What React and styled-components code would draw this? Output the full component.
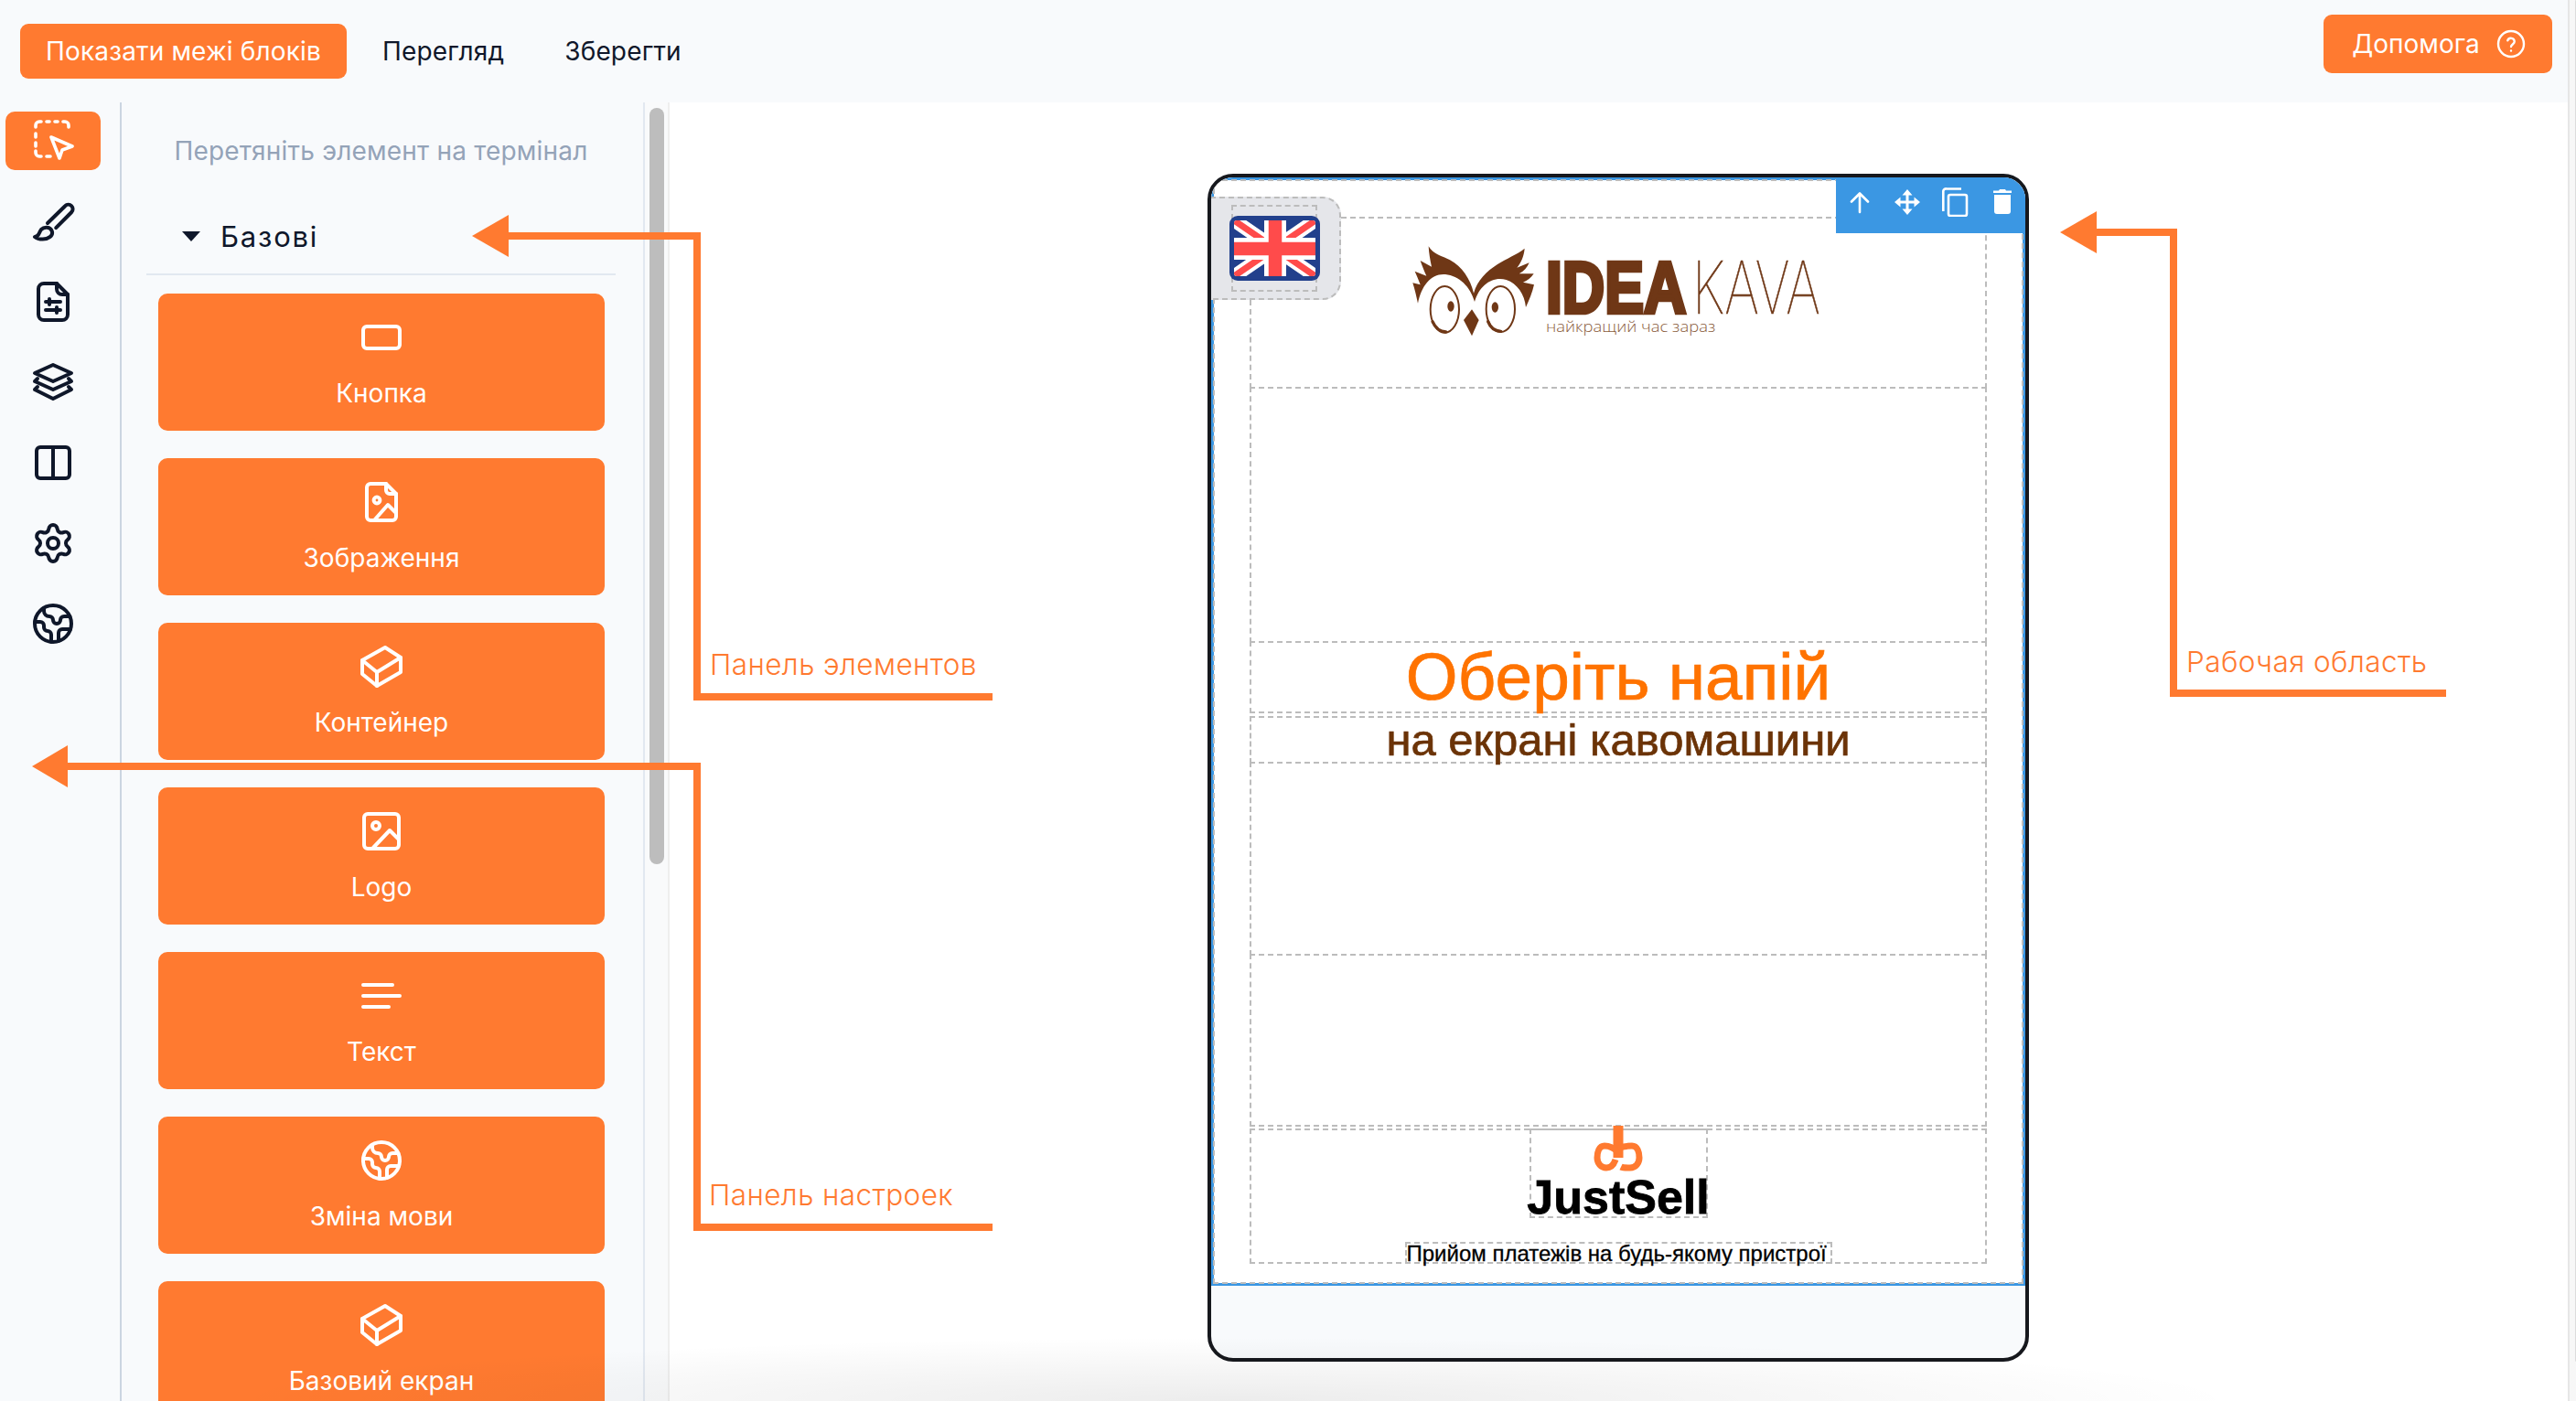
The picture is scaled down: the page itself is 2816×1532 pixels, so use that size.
import React from 'react';
import styled, { createGlobalStyle } from 'styled-components';
import { Settings, Earth } from 'lucide-react';

const orange = '#ff7a30';

const GlobalStyle = createGlobalStyle`
html, body {
    margin: 0;
    padding: 0;
    background: #fff;
    overflow: hidden;
}
* {
    box-sizing: border-box;
}
`;

const Page = styled.div`
position: relative;
display: flex;
width: 2816px;
height: 1532px;
overflow: hidden;
font-family: Inter, "Noto Sans", sans-serif;
color: #0f172a;
`;

const Main = styled.div`
display: flex;
flex-direction: column;
width: 2807px;
height: 100%;
`;

const PageScroll = styled.div`
width: 9px;
height: 100%;
padding: 0 0 43px 6px;
background: #f7f7f7;
border-left: 2px solid #e6e6e6;
`;

const PageThumb = styled.div`
width: 3px;
height: 100%;
border-radius: 2px;
background: #dcdcdc;
`;

const TopBar = styled.header`
display: flex;
justify-content: space-between;
align-items: flex-start;
height: 112px;
flex-shrink: 0;
background: #f8fafc;
`;

const TopLeft = styled.div`
display: flex;
align-items: center;
padding: 26px 0 0 22px;
`;

const ShowButton = styled.div`
display: flex;
align-items: center;
justify-content: center;
width: 357px;
height: 60px;
border-radius: 9px;
background: ${orange};
color: #fff;
font-size: 28px;
letter-spacing: 0.15px;
`;

const BarLink = styled.div`
padding: 0 33px;
margin-left: ${props => props.$first ? '6px' : '0'};
font-size: 28px;
line-height: 60px;
letter-spacing: 0.15px;
`;

const HelpButton = styled.div`
display: flex;
align-items: center;
justify-content: center;
gap: 18px;
width: 250px;
height: 64px;
margin: 16px 17px 0 0;
padding-left: 2px;
border-radius: 9px;
background: ${orange};
color: #fff;
font-size: 28px;
`;

const Body = styled.div`
display: flex;
flex: 1;
min-height: 0;
`;

const Rail = styled.nav`
display: flex;
flex-direction: column;
align-items: center;
width: 133px;
flex-shrink: 0;
padding: 10px 21px 0 6px;
background: #f8fafc;
border-right: 2px solid #cbd5e1;
`;

const RailItem = styled.div`
display: flex;
align-items: center;
justify-content: center;
width: 104px;
height: ${props => props.$active ? '64px' : '88px'};
flex-shrink: 0;
margin-bottom: ${props => props.$active ? '12px' : '0'};
border-radius: 10px;
background: ${props => props.$active ? orange : 'transparent'};
color: ${props => props.$active ? '#fff' : '#0f172a'};
`;

const Panel = styled.aside`
width: 570px;
flex-shrink: 0;
padding: 36px 30px 0 27px;
background: #f8fafc;
overflow: hidden;
`;

const Hint = styled.div`
height: 34px;
font-size: 28px;
line-height: 34px;
letter-spacing: 0.2px;
text-align: center;
white-space: nowrap;
color: #94a3b8;
`;

const SectionHead = styled.div`
display: flex;
align-items: center;
height: 34px;
margin-top: 59px;
padding: 0 0 24px 39px;
border-bottom: 2px solid #e2e8f0;
box-sizing: content-box;
`;

const Caret = styled.div`
width: 0;
height: 0;
border-left: 10px solid transparent;
border-right: 10px solid transparent;
border-top: 11px solid #0f172a;
`;

const SectionTitle = styled.span`
margin-left: 22px;
font-size: 31px;
letter-spacing: 1.8px;
`;

const CardList = styled.div`
display: flex;
flex-direction: column;
gap: 30px;
width: 488px;
margin: 20px 0 0 13px;
`;

const Card = styled.div`
display: flex;
flex-direction: column;
align-items: center;
height: 150px;
flex-shrink: 0;
padding-top: 24px;
border-radius: 10px;
background: ${orange};
color: #fff;
`;

const CardLabel = styled.div`
margin-top: 20px;
font-size: 28px;
line-height: 34px;
`;

const ScrollColumn = styled.div`
width: 29px;
flex-shrink: 0;
padding: 6px 5px 0 5px;
background: #f9fafb;
border-left: 2px solid #e2e8f0;
border-right: 2px solid #eeeeee;
`;

const ScrollThumb = styled.div`
width: 16px;
height: 827px;
border-radius: 8px;
background: #bdbdbd;
`;

const Canvas = styled.main`
flex: 1;
padding: 78px 0 0 588px;
background: #fff;
`;

const Device = styled.div`
width: 898px;
height: 1299px;
border: 4px solid #16181d;
border-radius: 28px;
background: #f8fafc;
overflow: hidden;
`;

const Screen = styled.div`
position: relative;
height: 1212px;
padding: 40px 39px 0;
background: #fff;
border: 3px solid #3b97e3;
outline: 2px dashed #bcbcbc;
outline-offset: -4px;
`;

const BlockToolbar = styled.div`
position: absolute;
top: -3px;
right: -3px;
display: flex;
align-items: center;
gap: 22px;
width: 207px;
height: 61px;
padding: 0 0 8px 11px;
background: #3b97e3;
color: #fff;
`;

const ToolSlot = styled.div`
display: flex;
align-items: center;
justify-content: center;
width: 30px;
height: 32px;
`;

const FlagBox = styled.div`
position: absolute;
top: 18px;
left: -4px;
display: flex;
align-items: center;
width: 143px;
height: 113px;
padding-left: 23px;
background: #e5e6ea;
border: 2px dashed #bcbcbc;
border-left: none;
border-radius: 0 20px 20px 0;
`;

const FlagInner = styled.div`
display: flex;
align-items: center;
justify-content: center;
width: 94px;
height: 95px;
border: 2px dashed #bcbcbc;
`;

const FlagSvg = styled.svg`
flex-shrink: 0;
`;

const Block = styled.div`
display: flex;
flex-direction: column;
align-items: center;
justify-content: ${props => props.$top ? 'space-between' : 'center'};
height: ${props => props.$h}px;
margin-top: ${props => props.$mt}px;
border: 2px dashed #bcbcbc;
`;

const BigTitle = styled.div`
margin-top: -2px;
font-family: "Liberation Sans", Arial, sans-serif;
font-size: 73px;
line-height: 75px;
color: #ff7300;
white-space: nowrap;
-webkit-text-stroke: 0.7px #ff7300;
`;

const SubTitle = styled.div`
font-family: "Liberation Sans", Arial, sans-serif;
font-size: 49px;
line-height: 48px;
color: #6b3307;
white-space: nowrap;
-webkit-text-stroke: 0.7px #6b3307;
`;

const BrandBox = styled.div`
display: flex;
flex-direction: column;
align-items: center;
width: 195px;
height: 98px;
margin-top: -2px;
border: 2px dashed #bcbcbc;
`;

const BrandMark = styled.svg`
display: block;
flex-shrink: 0;
margin-top: -5px;
`;

const BrandName = styled.div`
margin-top: 1px;
font-family: "Liberation Sans", Arial, sans-serif;
font-weight: 700;
font-size: 52px;
line-height: 50px;
color: #000;
white-space: nowrap;
-webkit-text-stroke: 0.8px #000;
`;

const Tagline = styled.div`
width: 467px;
height: 24px;
margin-bottom: -2px;
border: 2px dashed #bcbcbc;
font-family: "Liberation Sans", Arial, sans-serif;
font-size: 24px;
line-height: 22px;
color: #000;
white-space: nowrap;
overflow-x: clip;
-webkit-text-stroke: 0.3px #000;
`;

const AnnotationLayer = styled.svg`
position: absolute;
top: 0;
left: 0;
pointer-events: none;
`;

const Note = styled.div`
position: absolute;
top: ${props => props.$y}px;
left: ${props => props.$x}px;
font-size: 31.5px;
line-height: 36px;
letter-spacing: 0.4px;
font-weight: 300;
color: ${orange};
white-space: nowrap;
`;

const BottomShade = styled.div`
position: absolute;
left: 0;
bottom: 0;
width: 100%;
height: 70px;
pointer-events: none;
background: radial-gradient(ellipse 1100px 70px at 1350px 100%, rgba(0, 0, 0, 0.075), rgba(0, 0, 0, 0));
`;

const Icon = ({ size = 48, box = 24, stroke = 2, children }) => (
    <svg width={size} height={size} viewBox={`0 0 ${box} ${box}`} fill="none" stroke="currentColor"
        strokeWidth={stroke} strokeLinecap="round" strokeLinejoin="round">
        {children}
    </svg>
);

const SelectIcon = () => (
    <Icon size={46} box={46} stroke={3.6}>
        <path d="M4 8V6a4 4 0 0 1 4-4h2M16 2h3M25 2h3M34 2h2a4 4 0 0 1 4 4v2M4 15v4M4 25v4M4 34v2a4 4 0 0 0 4 4h2M16 40h4" />
        <path d="M21 19 44 29 33 33 30 42Z" />
    </Icon>
);

const BrushIcon = () => (
    <Icon>
        <path d="M9 13 18.6 3.6a2.4 2.4 0 0 1 3.5 3.4L13.6 15.6" />
        <path d="M2 20.5C4.5 20.5 4.2 18 5.5 16.5 7.2 14.8 10.6 15 11.4 17.4 12.2 20 9.2 21.8 6.4 21.8 4.8 21.8 3 21.4 2 20.5Z" />
    </Icon>
);

const FileSlidersIcon = () => (
    <Icon>
        <path d="M14 2H7a3 3 0 0 0-3 3v14a3 3 0 0 0 3 3h10a3 3 0 0 0 3-3V8Z" />
        <path d="M14 2v3a3 3 0 0 0 3 3h3" />
        <path d="M8 12h8M8 16.5h8M10 10.500v3M14 15v3" />
    </Icon>
);

const LayersIcon = () => (
    <Icon>
        <path d="M12 2.500 22 7 12 11.500 2 7Z" />
        <path d="M3.500 10 2 11.500 12 16 22 11.500 20.500 10" />
        <path d="M3.500 14.500 2 16 12 21 22 16 20.500 14.500" />
    </Icon>
);

const SplitIcon = () => (
    <Icon>
        <rect x="3" y="3.5" width="18" height="17" rx="2" />
        <path d="M12 3.5v17" />
    </Icon>
);

const ButtonIcon = () => (
    <Icon>
        <rect x="2" y="6" width="20" height="12" rx="2" />
    </Icon>
);

const FileImageIcon = () => (
    <Icon>
        <path d="M14.5 2H6a2 2 0 0 0-2 2v16a2 2 0 0 0 2 2h12a2 2 0 0 0 2-2V7.5Z" />
        <path d="M14.5 2v3.5a2 2 0 0 0 2 2H20" />
        <circle cx="9.5" cy="11" r="1.7" />
        <path d="M8 22 15.5 13.5 20 18" />
    </Icon>
);

const BoxIcon = () => (
    <Icon>
        <path d="M14 1.500 22.500 7V15L9.500 22.500 1.500 16V8.500Z" />
        <path d="M1.500 8.500 9.500 15 22.500 7M9.500 15v7.500" />
    </Icon>
);

const ImageIcon = () => (
    <Icon>
        <rect x="2.5" y="2.5" width="19" height="19" rx="2" />
        <circle cx="9" cy="9" r="2" />
        <path d="M7.500 21 16.500 11.500 21.500 16.500" />
    </Icon>
);

const TextIcon = () => (
    <Icon>
        <path d="M2 6h16M2 12h20M2 18h14" />
    </Icon>
);

const ArrowUpTool = () => (
    <Icon size={30} box={30} stroke={2.6}>
        <path d="M15 26V6M6 14.500 15 5.500 24 14.500" />
    </Icon>
);

const MoveTool = () => (
    <svg width="30" height="30" viewBox="0 0 30 30" fill="currentColor">
        <path d="M15 1 20.500 7.500H9.500ZM15 29 9.500 22.500H20.500ZM1 15 7.500 9.500V20.500ZM29 15 22.500 20.500V9.500Z" />
        <path d="M13.500 7h3v6.500H23v3h-6.500V23h-3v-6.500H7v-3h6.500Z" />
    </svg>
);

const CopyTool = () => (
    <svg width="30" height="32" viewBox="0 0 30 32" fill="none" stroke="currentColor" strokeWidth="2.6">
        <path d="M22 1.500H6A3 3 0 0 0 2.300 4V26" />
        <rect x="8" y="8" width="20" height="23" rx="2" />
    </svg>
);

const TrashTool = () => (
    <svg width="24" height="30" viewBox="0 0 24 30" fill="currentColor">
        <path d="M2 2.500h6L9 1h6l1 1.500h6V5H2Z" />
        <path d="M3 7h18v18a3 3 0 0 1-3 3H6a3 3 0 0 1-3-3Z" />
    </svg>
);

const HelpIcon = () => (
    <Icon size={32} stroke={1.8}>
        <circle cx="12" cy="12" r="10.500" />
        <path d="M9.200 9.200a2.900 2.900 0 0 1 5.600 1c0 1.900-2.800 2.400-2.800 4M12 17.600h.01" />
    </Icon>
);

const UkFlag = () => (
    <FlagSvg width="99" height="71" viewBox="0 0 99 71">
        <defs>
            <clipPath id="flag-area">
                <rect x="5" y="5" width="89" height="61" rx="3" />
            </clipPath>
        </defs>
        <rect width="99" height="71" rx="9" fill="#22408c" />
        <g clipPath="url(#flag-area)">
            <path d="M5 5 94 66M94 5 5 66" stroke="#fff" strokeWidth="15" />
            <path d="M5 5 94 66M94 5 5 66" stroke="#ff4b4b" strokeWidth="7" />
            <path d="M50 5V66M5 36H94" stroke="#fff" strokeWidth="24" />
            <path d="M50 5V66M5 36H94" stroke="#ff4b4b" strokeWidth="14.500" />
        </g>
    </FlagSvg>
);

const IdeaKavaLogo = () => (
    <svg width="478" height="162" viewBox="0 0 1434 486">
        <g fill="#6f3716">
            <path d="M95 58C110 85 140 90 165 103 205 125 232 165 243 212 255 170 285 140 320 118 350 98 385 85 410 65 408 90 398 112 385 128L425 112C418 128 408 140 392 148L440 148C430 162 420 170 405 176L441 184C435 210 425 235 414 258 410 215 385 180 350 168 305 155 262 185 246 240 232 190 195 155 150 150 105 146 72 185 60 245 55 222 50 200 43 178L68 184C62 168 56 154 50 140L88 155C80 138 74 122 68 105L105 125C100 102 96 80 95 58Z" />
            <path d="M237 265 260 300 237 352 210 300Z" />
            <ellipse cx="168" cy="255" rx="11" ry="17" />
            <ellipse cx="313" cy="258" rx="11" ry="17" />
        </g>
        <g fill="none" stroke="#6f3716" strokeWidth="6">
            <ellipse cx="148" cy="265" rx="47" ry="76" />
            <ellipse cx="331" cy="264" rx="47" ry="75" />
        </g>
        <g fill="none" stroke="#6f3716" strokeWidth="10" strokeLinecap="round">
            <path d="M108 305C118 328 132 338 152 339" />
            <path d="M290 305C298 326 312 336 332 337" />
        </g>
        <text x="480" y="276" fontFamily="Liberation Sans" fontWeight="700" fontSize="241" textLength="460"
            lengthAdjust="spacingAndGlyphs" fill="#6f3716" stroke="#6f3716" strokeWidth="14">IDEA</text>
        <text x="960" y="278" fontFamily="Inter" fontWeight="100" fontSize="238" textLength="420"
            lengthAdjust="spacingAndGlyphs" fill="#6f3716" stroke="#6f3716" strokeWidth="2">KAVA</text>
        <text x="480" y="340" fontFamily="Open Sans" fontWeight="300" fontSize="50" textLength="556"
            lengthAdjust="spacingAndGlyphs" fill="#8a5c3c">найкращий час зараз</text>
    </svg>
);

const Annotations = () => (
    <AnnotationLayer width="2816" height="1532" viewBox="0 0 2816 1532" fill={orange}>
        <path d="M516 258 556 235V281Z" />
        <path d="M556 254H766V758H1085V766H758V262H556Z" />
        <path d="M35 838 74 815V861Z" />
        <path d="M74 834H766V1338H1085V1346H758V842H74Z" />
        <path d="M2252 254 2292 231V277Z" />
        <path d="M2292 250H2380V754H2674V762H2372V258H2292Z" />
    </AnnotationLayer>
);

const blocks = [
    { label: 'Кнопка', icon: <ButtonIcon /> },
    { label: 'Зображення', icon: <FileImageIcon /> },
    { label: 'Контейнер', icon: <BoxIcon /> },
    { label: 'Logo', icon: <ImageIcon /> },
    { label: 'Текст', icon: <TextIcon /> },
    { label: 'Зміна мови', icon: <Earth size={48} strokeWidth={2} /> },
    { label: 'Базовий екран', icon: <BoxIcon /> }
];

const railIcons = [
    <BrushIcon />,
    <FileSlidersIcon />,
    <LayersIcon />,
    <SplitIcon />,
    <Settings size={48} strokeWidth={2} />,
    <Earth size={48} strokeWidth={2} />
];

const App = () => {
    return (
        <Page>
            <GlobalStyle />
            <Main>
                <TopBar>
                    <TopLeft>
                        <ShowButton>Показати межі блоків</ShowButton>
                        <BarLink $first>Перегляд</BarLink>
                        <BarLink>Зберегти</BarLink>
                    </TopLeft>
                    <HelpButton>
                        Допомога
                        <HelpIcon />
                    </HelpButton>
                </TopBar>
                <Body>
                    <Rail>
                        <RailItem $active><SelectIcon /></RailItem>
                        {railIcons.map((icon, index) => (
                            <RailItem key={index}>{icon}</RailItem>
                        ))}
                    </Rail>
                    <Panel>
                        <Hint>Перетяніть элемент на термінал</Hint>
                        <SectionHead>
                            <Caret />
                            <SectionTitle>Базові</SectionTitle>
                        </SectionHead>
                        <CardList>
                            {blocks.map((block, index) => (
                                <Card key={index}>
                                    {block.icon}
                                    <CardLabel>{block.label}</CardLabel>
                                </Card>
                            ))}
                        </CardList>
                    </Panel>
                    <ScrollColumn>
                        <ScrollThumb />
                    </ScrollColumn>
                    <Canvas>
                        <Device>
                            <Screen>
                                <Block $h={188} $mt={0}>
                                    <IdeaKavaLogo />
                                </Block>
                                <Block $h={280} $mt={-2} />
                                <Block $h={79} $mt={-2}>
                                    <BigTitle>Оберіть напій</BigTitle>
                                </Block>
                                <Block $h={52} $mt={3}>
                                    <SubTitle>на екрані кавомашини</SubTitle>
                                </Block>
                                <Block $h={212} $mt={-2} />
                                <Block $h={189} $mt={-2} />
                                <Block $h={148} $mt={2} $top>
                                    <BrandBox>
                                        <BrandMark width="60" height="52" viewBox="1739 1233 60 52" fill="none"
                                            stroke={orange} strokeWidth="7">
                                            <path d="M1769 1233V1268" strokeWidth="11" />
                                            <path d="M1769 1262C1764 1257 1758 1255 1754 1255 1748 1255 1746 1262 1746 1268 1746 1274 1750 1279 1756 1279 1760 1279 1764 1276 1766 1270" />
                                            <path d="M1769 1258C1774 1255 1780 1255 1784 1255 1790 1255 1792 1262 1792 1268 1792 1274 1788 1279 1782 1279 1778 1279 1774 1279 1772 1278" />
                                        </BrandMark>
                                        <BrandName>JustSell</BrandName>
                                    </BrandBox>
                                    <Tagline>Прийом платежів на будь-якому пристрої</Tagline>
                                </Block>
                                <FlagBox>
                                    <FlagInner>
                                        <UkFlag />
                                    </FlagInner>
                                </FlagBox>
                                <BlockToolbar>
                                    <ToolSlot><ArrowUpTool /></ToolSlot>
                                    <ToolSlot><MoveTool /></ToolSlot>
                                    <ToolSlot><CopyTool /></ToolSlot>
                                    <ToolSlot><TrashTool /></ToolSlot>
                                </BlockToolbar>
                            </Screen>
                        </Device>
                    </Canvas>
                </Body>
            </Main>
            <PageScroll>
                <PageThumb />
            </PageScroll>
            <BottomShade />
            <Annotations />
            <Note $x={776} $y={709}>Панель элементов</Note>
            <Note $x={775} $y={1289}>Панель настроек</Note>
            <Note $x={2390} $y={706}>Рабочая область</Note>
        </Page>
    );
};

export default App;
